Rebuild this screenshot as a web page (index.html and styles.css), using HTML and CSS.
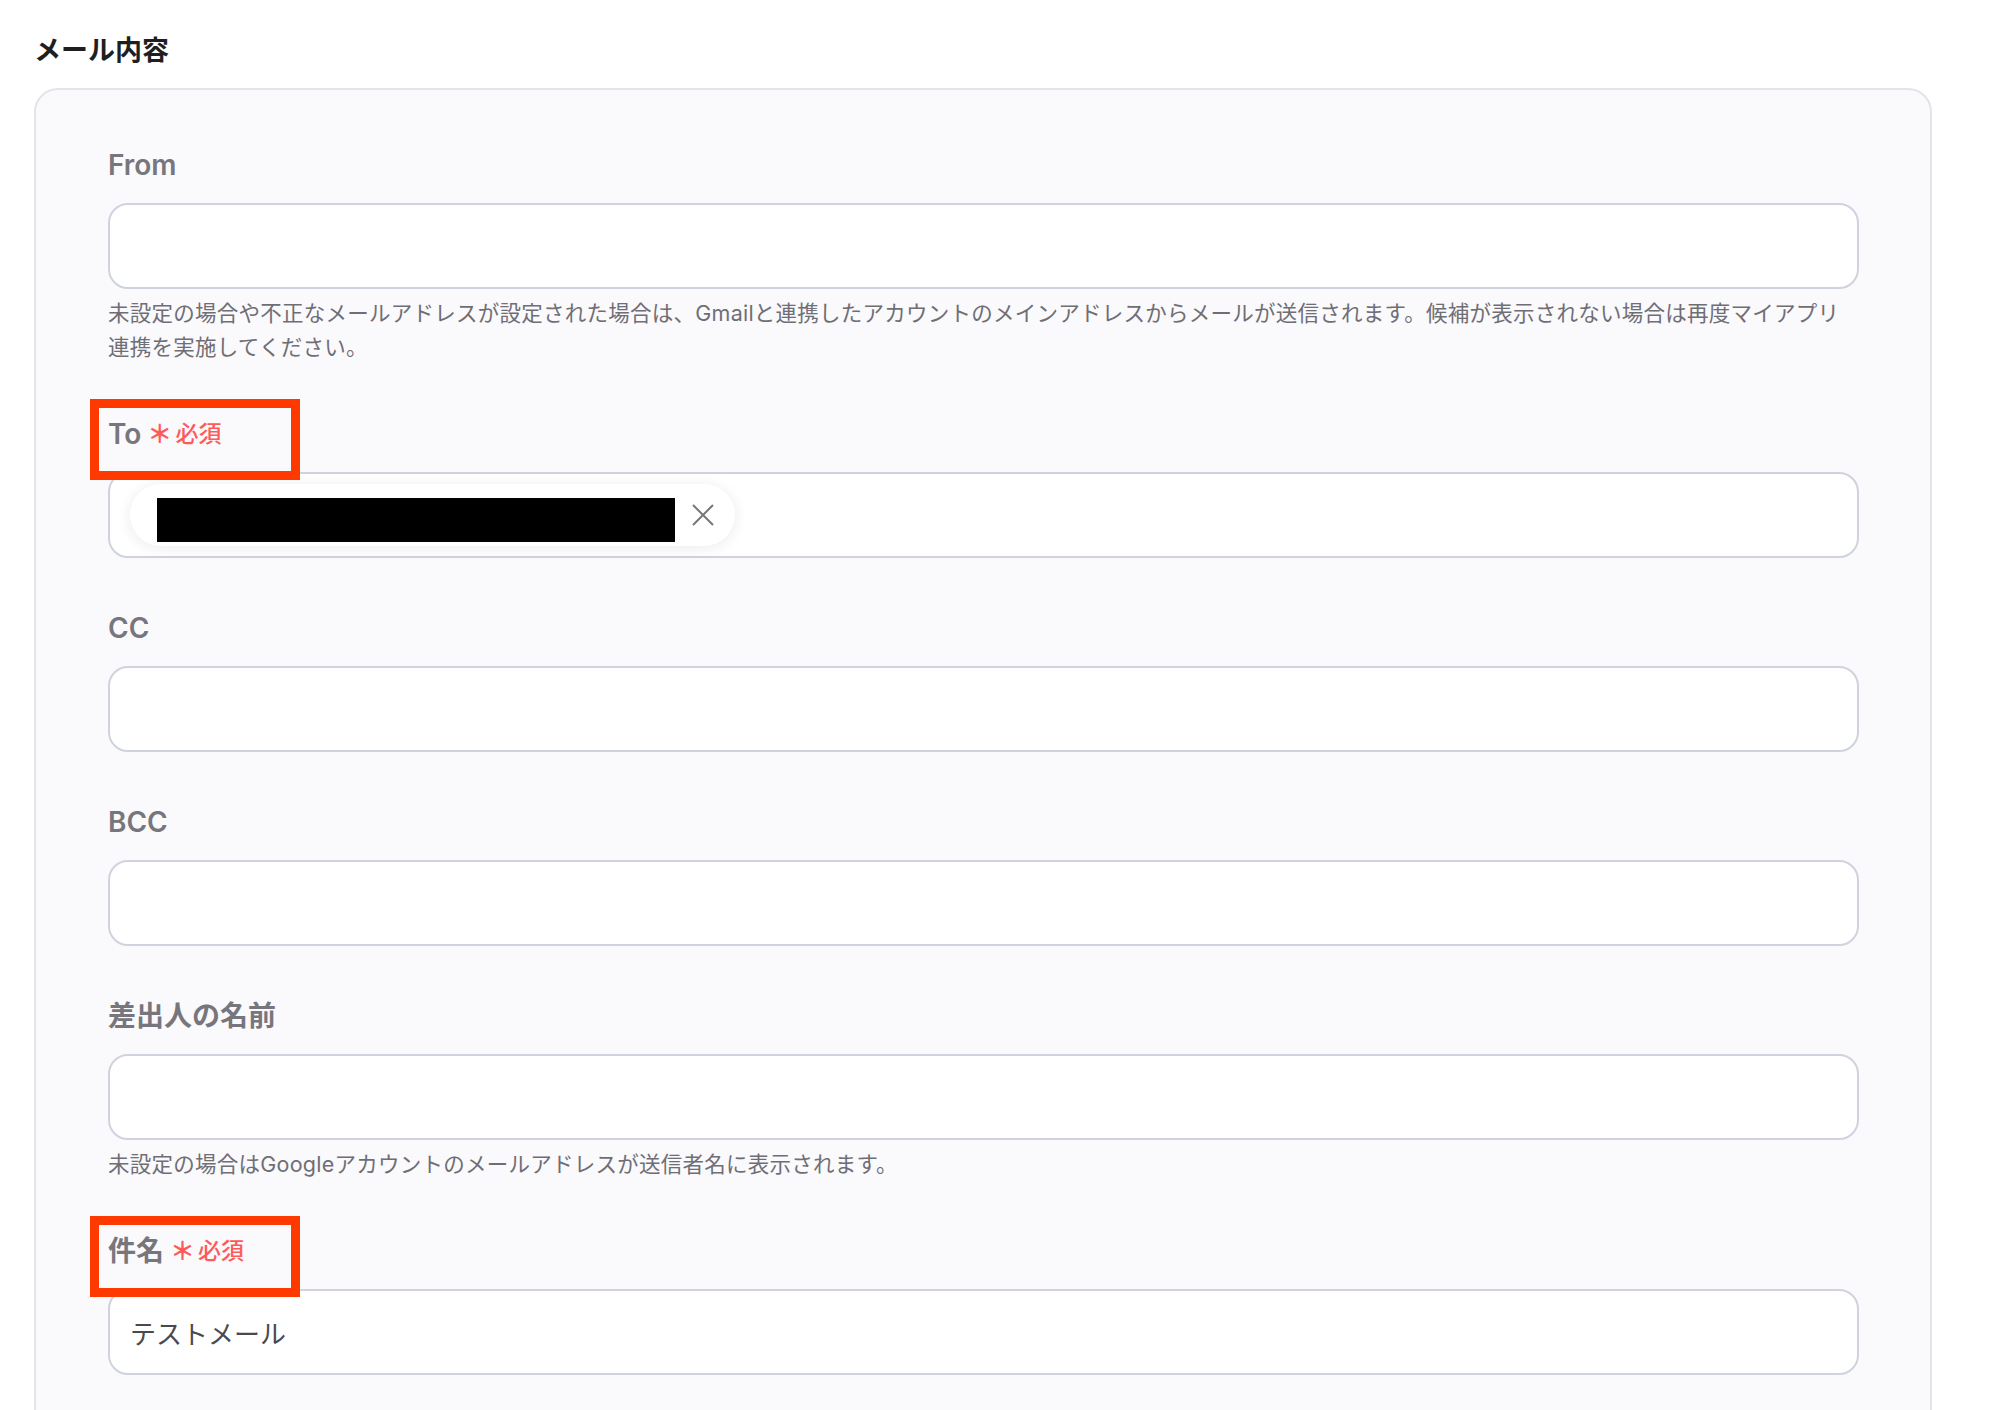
FILE: index.html
```html
<!DOCTYPE html>
<html lang="ja">
<head>
    <meta charset="UTF-8">
    <meta name="viewport" content="width=device-width, initial-scale=1.0">
    <title>メール内容</title>
    <link rel="stylesheet" href="styles.css">
</head>
<body>
    <div class="page">
        <h2 class="section-title">メール内容</h2>

        <div class="card">
            <div class="field">
                <div class="field-label">From</div>
                <div class="input"></div>
                <p class="help">未設定の場合や不正なメールアドレスが設定された場合は、Gmailと連携したアカウントのメインアドレスからメールが送信されます。候補が表示されない場合は再度マイアプリ<br>連携を実施してください。</p>
            </div>

            <div class="field">
                <div class="field-label">
                    To <span class="required"><span class="mark">＊</span>必須</span>
                    <span class="highlight"></span>
                </div>
                <div class="input">
                    <span class="chip">
                        <span class="redacted"></span>
                        <svg class="chip-close" width="24" height="24" viewBox="0 0 24 24">
                            <path d="M2 2 L22 22 M22 2 L2 22" stroke="#76767c" stroke-width="2" fill="none"/>
                        </svg>
                    </span>
                </div>
            </div>

            <div class="field">
                <div class="field-label">CC</div>
                <div class="input"></div>
            </div>

            <div class="field">
                <div class="field-label">BCC</div>
                <div class="input"></div>
            </div>

            <div class="field">
                <div class="field-label">差出人の名前</div>
                <div class="input"></div>
                <p class="help">未設定の場合はGoogleアカウントのメールアドレスが送信者名に表示されます。</p>
            </div>

            <div class="field">
                <div class="field-label">
                    件名 <span class="required"><span class="mark">＊</span>必須</span>
                    <span class="highlight"></span>
                </div>
                <div class="input">テストメール</div>
            </div>
        </div>
    </div>
</body>
</html>
```

FILE: styles.css
```css
body {
    margin: 0;
    padding: 0;
    background: #ffffff;
    font-family: Inter, "Noto Sans CJK JP", sans-serif;
    color: #222222;
}
.page {
    padding: 33px 58px 0 34px;
}
.section-title {
    margin: 0 0 19px 0;
    font-size: 27px;
    line-height: 36px;
    font-weight: 700;
    color: #1f1f22;
}
.card {
    background: #faf9fc;
    border: 2px solid #e4e3e9;
    border-radius: 24px;
    padding: 57px 71px 60px 72px;
    display: flex;
    flex-direction: column;
    gap: 52px;
}
.field {
    display: flex;
    flex-direction: column;
}
.field-label {
    position: relative;
    font-size: 28px;
    line-height: 36px;
    font-weight: 600;
    color: #77767c;
    margin-bottom: 20px;
    display: flex;
    align-items: center;
}
.required {
    display: inline-flex;
    align-items: center;
    margin-left: 6px;
    font-size: 23px;
    font-weight: 500;
    color: #ff5a5a;
}
.required .mark {
    font-size: 25px;
    font-weight: 700;
    margin-right: 3px;
}
/* 赤枠の注釈 */
.highlight {
    position: absolute;
    left: -18px;
    top: -17px;
    width: 210px;
    height: 81px;
    box-sizing: border-box;
    border: 9px solid #ff3a00;
    pointer-events: none;
}
.input {
    height: 86px;
    box-sizing: border-box;
    background: #ffffff;
    border: 2px solid #ced3dd;
    border-radius: 20px;
    padding: 0 20px;
    display: flex;
    align-items: center;
    font-size: 26px;
    color: #4a4a4e;
}
.help {
    margin: 7px 0 0 0;
    font-size: 21.5px;
    line-height: 34px;
    letter-spacing: 0.25px;
    color: #6f6e75;
}
.chip {
    display: inline-flex;
    align-items: center;
    height: 62px;
    box-sizing: border-box;
    padding: 0 20px 0 27px;
    background: #ffffff;
    border-radius: 31px;
    box-shadow: 0 2px 14px rgba(30, 30, 60, 0.09);
}
.redacted {
    display: block;
    width: 518px;
    height: 44px;
    margin-top: 10px;
    background: #000000;
}
.chip-close {
    margin-left: 16px;
}
```
